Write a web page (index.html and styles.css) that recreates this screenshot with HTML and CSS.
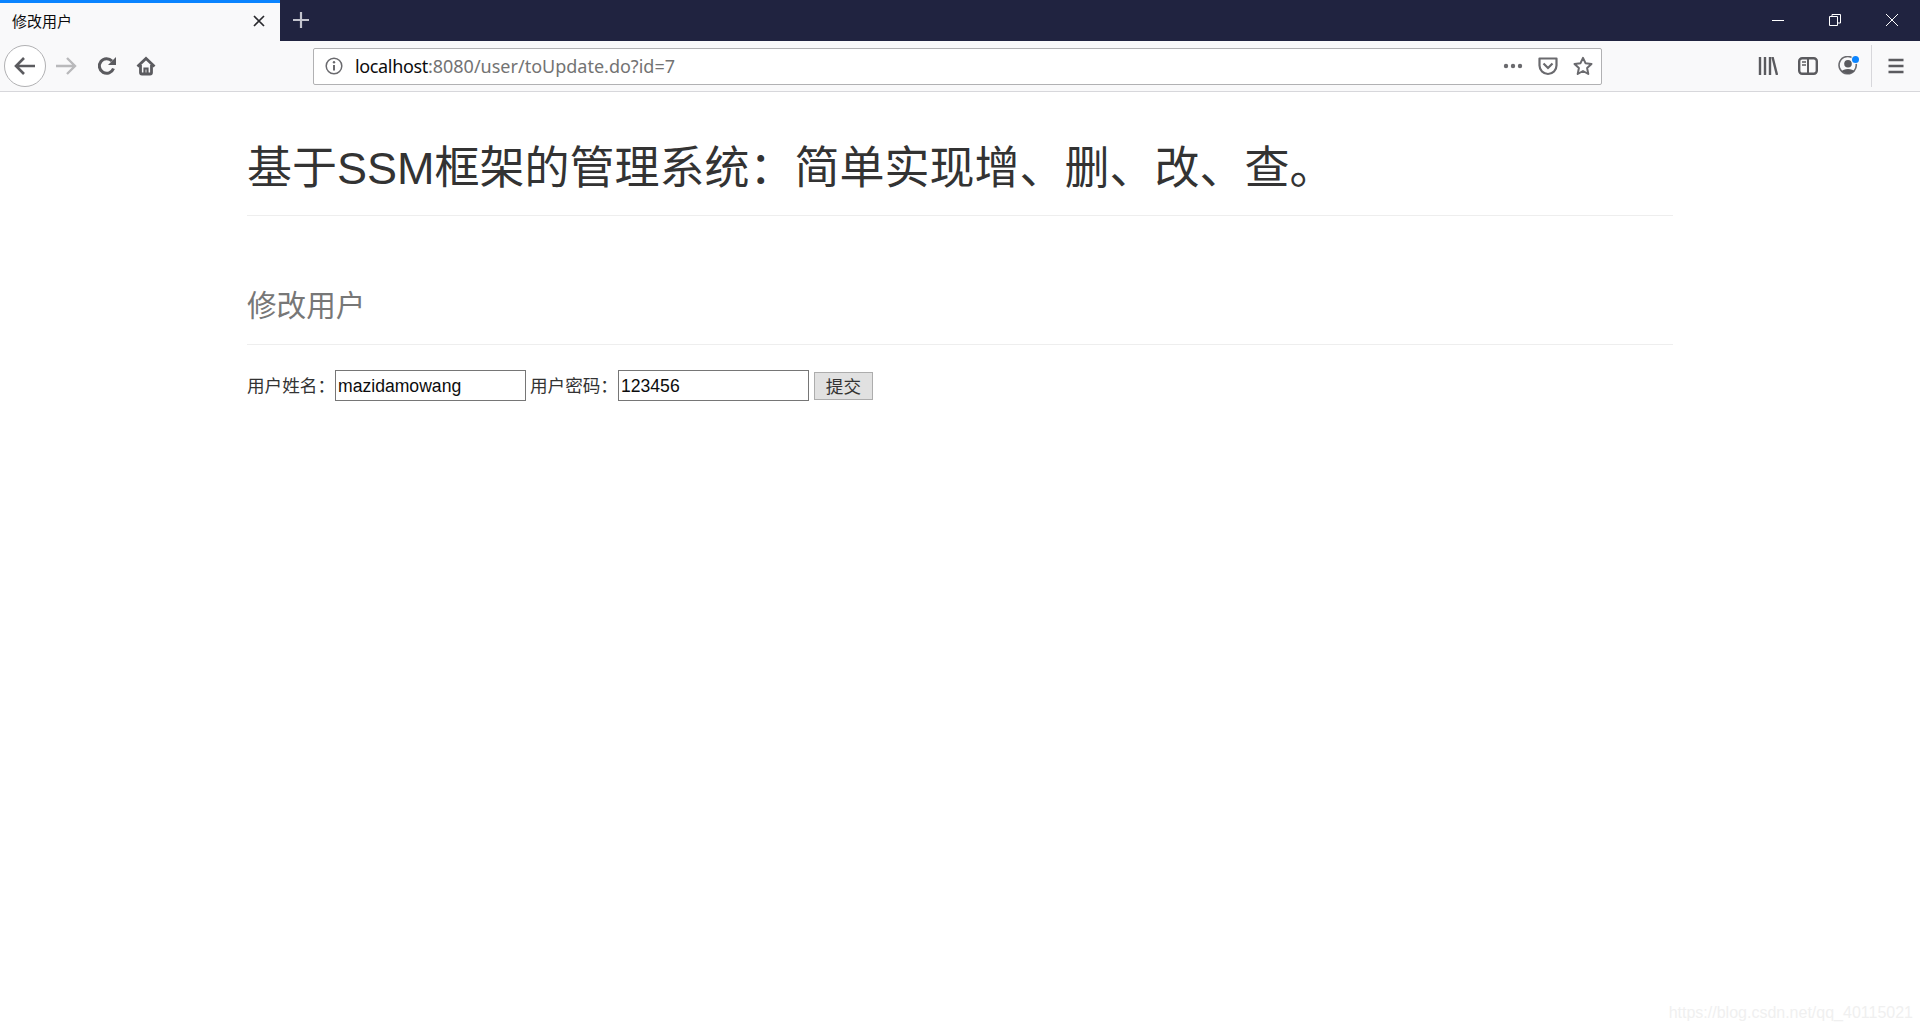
FILE: index.html
```html
<!DOCTYPE html>
<html lang="en">
<head>
    <meta charset="UTF-8">
    <title>修改用户</title>
    <link rel="stylesheet" href="styles.css">
</head>
<body>
    <div class="titlebar">
        <div class="tab">
            <span class="tab-title">修改用户</span>
            <svg class="tab-close" width="14" height="14" viewBox="0 0 14 14"><path d="M2 2 12 12M12 2 2 12" stroke="#2a2a2e" stroke-width="1.7" fill="none"/></svg>
        </div>
        <svg class="new-tab" width="18" height="18" viewBox="0 0 18 18"><path d="M9 1V17M1 9H17" stroke="#c3c4ce" stroke-width="2.2" fill="none"/></svg>
        <div class="window-buttons">
            <svg width="14" height="14" viewBox="0 0 14 14"><path d="M1 7.5H13" stroke="#fff" stroke-width="1" fill="none"/></svg>
            <svg width="14" height="14" viewBox="0 0 14 14"><path d="M1.5 3.5H9.5V12.5H1.5ZM4 3.5V1.5H12.5V10H9.5" stroke="#fff" stroke-width="1" fill="none"/></svg>
            <svg width="14" height="14" viewBox="0 0 14 14"><path d="M1 1 13 13M13 1 1 13" stroke="#fff" stroke-width="1" fill="none"/></svg>
        </div>
    </div>

    <div class="toolbar">
        <div class="nav-buttons">
            <div class="back-button">
                <svg width="22" height="20" viewBox="0 0 22 20"><path d="M10 2 2 10 10 18M2 10H21" stroke="#5b5b5f" stroke-width="2.6" fill="none"/></svg>
            </div>
            <svg class="nav-icon" width="22" height="20" viewBox="0 0 22 20"><path d="M12 2 20 10 12 18M20 10H1" stroke="#b9b9bb" stroke-width="2.4" fill="none"/></svg>
            <svg class="nav-icon" width="20" height="20" viewBox="0 0 20 20"><path d="M16.5 12.5A7.3 7.3 0 1 1 15 5" stroke="#5b5b5f" stroke-width="3" fill="none"/><path d="M19 1V9H11Z" fill="#5b5b5f"/></svg>
            <svg class="nav-icon home-icon" width="20" height="20" viewBox="0 0 20 20"><path d="M1.5 10.5 10 2.5 18.5 10.5" stroke="#5b5b5f" stroke-width="2.8" fill="none"/><path d="M4.5 9V16.5Q4.5 18 6 18H14Q15.5 18 15.5 16.5V9" stroke="#5b5b5f" stroke-width="2.8" fill="none"/><path d="M8.5 18V12.5H11.5V18" stroke="#5b5b5f" stroke-width="2.2" fill="none"/></svg>
        </div>

        <div class="urlbar">
            <svg class="info-icon" width="18" height="18" viewBox="0 0 18 18"><circle cx="9" cy="9" r="7.8" stroke="#6a6a6e" stroke-width="1.5" fill="none"/><path d="M9 8V13.5" stroke="#6a6a6e" stroke-width="2" fill="none"/><circle cx="9" cy="5.2" r="1.2" fill="#6a6a6e"/></svg>
            <span class="url"><span class="url-host">localhost</span>:8080/user/toUpdate.do?id=7</span>
            <div class="url-actions">
                <svg width="20" height="6" viewBox="0 0 20 6"><circle cx="3" cy="3" r="2.2" fill="#6a6a6e"/><circle cx="10" cy="3" r="2.2" fill="#6a6a6e"/><circle cx="17" cy="3" r="2.2" fill="#6a6a6e"/></svg>
                <svg width="20" height="19" viewBox="0 0 20 19"><path d="M1.5 1.5H18.5V8.5A8.5 8.5 0 0 1 1.5 8.5Z" stroke="#6a6a6e" stroke-width="2.2" fill="none" stroke-linejoin="round"/><path d="M5.5 6.5 10 11 14.5 6.5" stroke="#6a6a6e" stroke-width="2.2" fill="none"/></svg>
                <svg width="20" height="20" viewBox="0 0 20 20"><path d="M10 1.8 12.5 7.2 18.5 7.9 14.1 12 15.3 18 10 15 4.7 18 5.9 12 1.5 7.9 7.5 7.2Z" stroke="#6a6a6e" stroke-width="2" fill="none" stroke-linejoin="round"/></svg>
            </div>
        </div>

        <div class="tool-buttons">
            <svg width="20" height="18" viewBox="0 0 20 18"><path d="M2 0V18M7 0V18M12 0V18M14.5 0 19 18" stroke="#5b5b5f" stroke-width="2.4" fill="none"/></svg>
            <svg width="20" height="18" viewBox="0 0 20 18"><rect x="1.2" y="1.2" width="17.6" height="15.6" rx="3" stroke="#5b5b5f" stroke-width="2.4" fill="none"/><path d="M10 1V17" stroke="#5b5b5f" stroke-width="2"/><path d="M4 5H8M4 8H8" stroke="#5b5b5f" stroke-width="1.5"/></svg>
            <div class="account">
                <svg width="20" height="20" viewBox="0 0 20 20"><path d="M15.5 2.8A8.6 8.6 0 1 0 18 7" stroke="#6a6a6e" stroke-width="1.6" fill="none"/><circle cx="10" cy="7.8" r="3.8" fill="#5b5b5f"/><path d="M3.5 15.5C5 12 15 12 16.5 15.5L10 18Z" fill="#5b5b5f"/></svg>
                <span class="account-dot"></span>
            </div>
            <span class="tool-separator"></span>
            <svg class="menu-icon" width="16" height="16" viewBox="0 0 16 16"><path d="M0.5 2H15.5M0.5 8H15.5M0.5 14H15.5" stroke="#5b5b5f" stroke-width="2.4" fill="none"/></svg>
        </div>
    </div>

    <div class="container">
        <div class="page-header">
            <h1>基于SSM框架的管理系统：简单实现增、删、改、查。</h1>
        </div>
        <div class="section-header">
            <h3>修改用户</h3>
        </div>
        <form class="user-form">
            <label for="username">用户姓名：</label>
            <input type="text" id="username" value="mazidamowang">
            <label for="password">用户密码：</label>
            <input type="text" id="password" value="123456">
            <button type="button">提交</button>
        </form>
    </div>

    <div class="watermark">https://blog.csdn.net/qq_40115021</div>
</body>
</html>
```

FILE: styles.css
```css
body {
    margin: 0;
    height: 1030px;
    overflow: hidden;
    background-color: white;
    color: #333;
    font-family: "Liberation Sans", "Noto Sans CJK SC", sans-serif;
    font-size: 17.6px;
}

.titlebar {
    display: flex;
    align-items: center;
    height: 41px;
    background-color: #202340;
}

.tab {
    display: flex;
    align-items: center;
    justify-content: space-between;
    box-sizing: border-box;
    width: 280px;
    height: 41px;
    padding: 0 14px 3px 12px;
    background-color: #f9f9fa;
    border-top: 3px solid #0a84ff;
}

.tab-title {
    font-size: 15px;
    color: #0c0c0d;
}

.new-tab {
    margin: 0 0 2px 12px;
}

.window-buttons {
    display: flex;
    gap: 43px;
    margin: 0 0 2px auto;
    padding-right: 21px;
}

.toolbar {
    display: flex;
    align-items: center;
    box-sizing: border-box;
    height: 51px;
    background-color: #f9f9fa;
    border-bottom: 1px solid #d7d7db;
}

.nav-buttons {
    display: flex;
    align-items: center;
    width: 313px;
    padding-left: 4px;
    box-sizing: border-box;
}

.back-button {
    display: flex;
    align-items: center;
    justify-content: center;
    box-sizing: border-box;
    width: 42px;
    height: 42px;
    background-color: white;
    border: 1px solid #b1b1b3;
    border-radius: 50%;
}

.nav-icon {
    margin-left: 20px;
}

.back-button + .nav-icon {
    margin-left: 9px;
}

.home-icon {
    margin-left: 19px;
}

.urlbar {
    display: flex;
    align-items: center;
    box-sizing: border-box;
    width: 1289px;
    height: 37px;
    padding: 0 8px 0 11px;
    background-color: white;
    border: 1px solid #b1b1b3;
    border-radius: 2px;
}

.url {
    margin-left: 12px;
    font-family: "Noto Sans", "Liberation Sans", sans-serif;
    font-size: 18px;
    color: #737373;
}

.url-host {
    letter-spacing: -0.35px;
    color: #0c0c0d;
}

.url-actions {
    display: flex;
    align-items: center;
    gap: 15px;
    margin-left: auto;
}

.tool-buttons {
    display: flex;
    align-items: center;
    gap: 20px;
    margin-left: 156px;
}

.account {
    position: relative;
    height: 20px;
}

.account-dot {
    position: absolute;
    top: 0;
    right: -1px;
    width: 7px;
    height: 7px;
    background-color: #0a84ff;
    border-radius: 50%;
    box-shadow: 0 0 0 1px #f9f9fa;
}

.tool-separator {
    width: 1px;
    height: 42px;
    margin: 0 -3px 0 -7px;
    background-color: #d7d7db;
}

.menu-icon {
    margin-left: -1px;
}

.container {
    width: 1426px;
    margin: 0 auto;
}

.page-header {
    margin-top: 53px;
    padding-bottom: 22px;
    border-bottom: 1px solid #eee;
}

h1 {
    margin: 0;
    font-size: 45px;
    font-weight: 400;
    line-height: 48px;
}

.section-header {
    margin-top: 74px;
    padding-bottom: 22px;
    border-bottom: 1px solid #eee;
}

h3 {
    margin: 0;
    font-size: 29.6px;
    font-weight: 400;
    line-height: 32px;
    color: #777;
}

.user-form {
    display: flex;
    align-items: center;
    margin-top: 25px;
}

.user-form label {
    margin-bottom: 2px;
}

.user-form input {
    box-sizing: border-box;
    width: 191px;
    height: 31px;
    margin: 0 4px 0 0;
    padding: 2px 2px 0;
    border: 1px solid #767676;
    font: inherit;
    color: #0c0c0d;
}

.user-form button {
    box-sizing: border-box;
    width: 59px;
    height: 28px;
    margin-left: 1px;
    padding: 0 0 2px;
    background-color: #e1e1e1;
    border: 1px solid #adadad;
    font: inherit;
    color: #333;
}

.watermark {
    position: absolute;
    right: 7px;
    bottom: 8px;
    font-size: 16px;
    color: #f0f0f0;
}
```
